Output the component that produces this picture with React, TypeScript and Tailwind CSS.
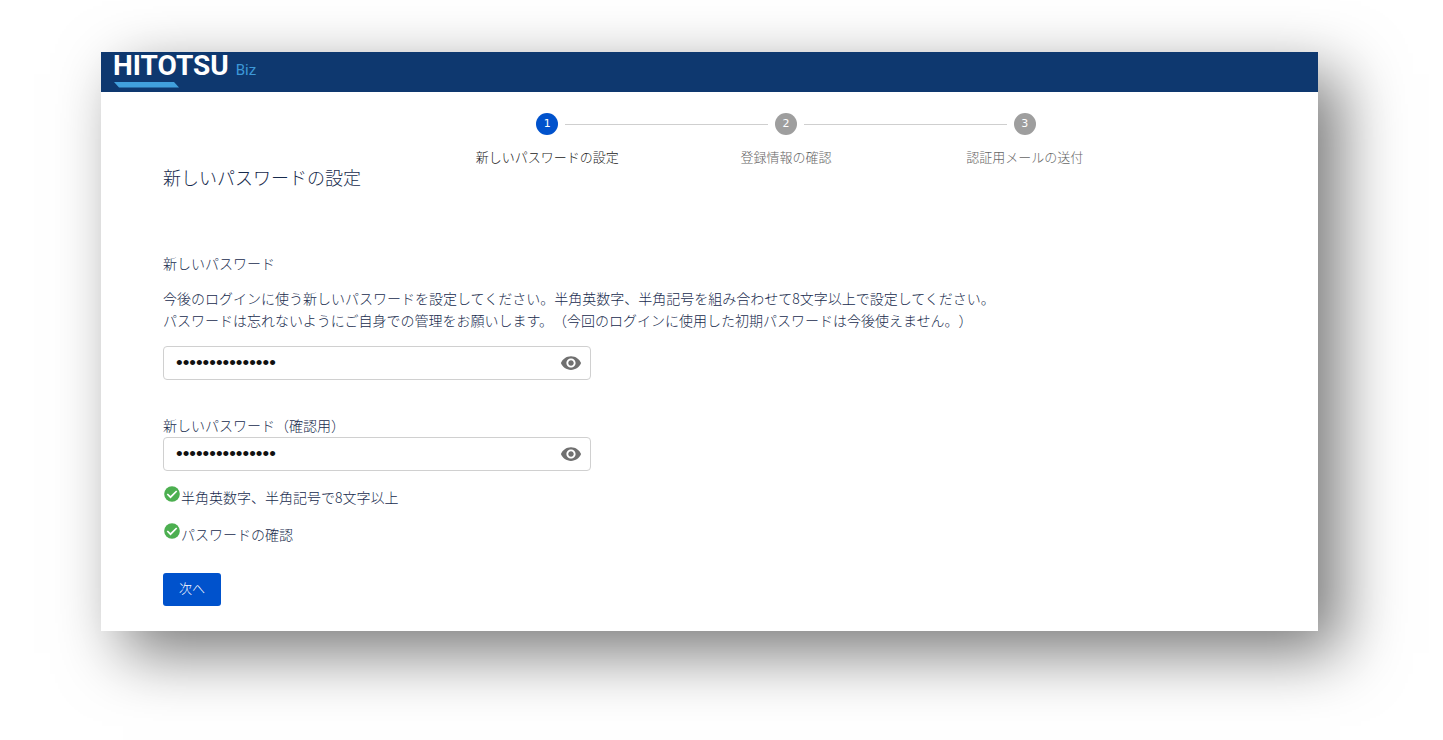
import { useState } from "react";
import { MdVisibility, MdVisibilityOff } from "react-icons/md";

const steps = ["新しいパスワードの設定", "登録情報の確認", "認証用メールの送付"];
const rules = ["半角英数字、半角記号で8文字以上", "パスワードの確認"];

function Logo() {
  return (
    <a href="#" aria-label="HITOTSU Biz" className="flex flex-col text-white">
      <span className="flex items-baseline gap-[7px]">
        <span className="font-['Roboto',sans-serif] text-[28px] leading-6 font-bold">HITOTSU</span>
        <span className="font-['Roboto',sans-serif] text-[15px] leading-6 font-normal text-[#3d98d8]">Biz</span>
      </span>
      <svg viewBox="0 0 65 6" className="ml-px h-[6px] w-[65px]" aria-hidden="true">
        <path d="M0 0H60L65 5.5H5Z" fill="#41a0dc" />
      </svg>
    </a>
  );
}

function CheckIcon() {
  return (
    <svg viewBox="0 0 18 18" className="-mt-0.5 size-[18px] shrink-0" aria-hidden="true">
      <circle cx="9" cy="9" r="7.8" fill="#4caf50" />
      <path d="M4.3 9L7.5 12.2L13.7 6" fill="none" stroke="#ffffff" strokeWidth="1.7" />
    </svg>
  );
}

function Stepper({ current }: { current: number }) {
  return (
    <ol className="grid grid-cols-3">
      {steps.map((label, i) => (
        <li key={label} className="flex flex-col">
          <div className="flex items-center gap-[7px]">
            <span className={i > 0 ? "h-px flex-1 bg-[#cfcfcf]" : "h-px flex-1"} />
            <span
              className={
                i === current
                  ? "flex size-[22px] items-center justify-center rounded-full bg-[#0052cc] font-['DejaVu_Sans',sans-serif] text-[11px] font-normal text-white"
                  : "flex size-[22px] items-center justify-center rounded-full bg-[#9e9e9e] font-['DejaVu_Sans',sans-serif] text-[11px] font-normal text-white"
              }
            >
              {i + 1}
            </span>
            <span className={i < steps.length - 1 ? "h-px flex-1 bg-[#cfcfcf]" : "h-px flex-1"} />
          </div>
          <span
            className={
              i === current
                ? "mt-3 text-center text-[13px] leading-5 text-[#212121]"
                : "mt-3 text-center text-[13px] leading-5 text-[#666666]"
            }
          >
            {label}
          </span>
        </li>
      ))}
    </ol>
  );
}

function PasswordField({ id }: { id: string }) {
  const [value, setValue] = useState("Abcd1234!efgh56");
  const [visible, setVisible] = useState(false);
  return (
    <div className="flex h-[34px] w-full max-w-[428px] items-center rounded border border-[#d0d0d0] pr-2 pl-3">
      <input
        id={id}
        type={visible ? "text" : "password"}
        value={value}
        onChange={(e) => setValue(e.target.value)}
        className="min-w-0 flex-1 bg-transparent font-['Liberation_Sans',sans-serif] text-[19px] leading-6 text-[#111111] outline-none"
      />
      <button
        type="button"
        aria-label="パスワードの表示切り替え"
        onClick={() => setVisible(!visible)}
        className="text-[#707070]"
      >
        {visible ? <MdVisibilityOff size={22} /> : <MdVisibility size={22} />}
      </button>
    </div>
  );
}

export default function App() {
  return (
    <div className="min-h-screen bg-white pt-[52px] pr-[125px] pb-[109px] pl-[101px] font-['Noto_Sans_CJK_JP',sans-serif] font-light text-[#172b4d] [text-spacing-trim:space-all]">
      <div className="bg-white shadow-[22px_22px_60px_rgba(0,0,0,0.53)]">
        <header className="flex h-10 bg-[#0e386f] pt-0.5 pl-3">
          <Logo />
        </header>
        <main className="pt-[21px] pb-[25px]">
          <div className="pr-[174px] pl-[327px]">
            <Stepper current={0} />
          </div>
          <form className="px-[62px]" onSubmit={(e) => e.preventDefault()}>
            <h1 className="text-lg leading-5">新しいパスワードの設定</h1>
            <label htmlFor="password" className="mt-[66px] block text-sm leading-5">
              新しいパスワード
            </label>
            <p className="mt-[14px] mb-[15px] text-sm leading-[22px]">
              今後のログインに使う新しいパスワードを設定してください。半角英数字、半角記号を組み合わせて8文字以上で設定してください。
              <br />
              パスワードは忘れないようにご自身での管理をお願いします。（今回のログインに使用した初期パスワードは今後使えません。）
            </p>
            <PasswordField id="password" />
            <label htmlFor="confirm" className="mt-[35px] mb-0.5 block text-sm leading-5">
              新しいパスワード（確認用）
            </label>
            <PasswordField id="confirm" />
            <ul className="mt-4 flex flex-col gap-[17px] text-sm leading-5">
              {rules.map((rule) => (
                <li key={rule} className="flex items-start">
                  <CheckIcon />
                  {rule}
                </li>
              ))}
            </ul>
            <button type="submit" className="mt-[29px] block h-[33px] rounded-[3px] bg-[#0052cc] px-4 pb-1 text-[13px] text-white">
              次へ
            </button>
          </form>
        </main>
      </div>
    </div>
  );
}
